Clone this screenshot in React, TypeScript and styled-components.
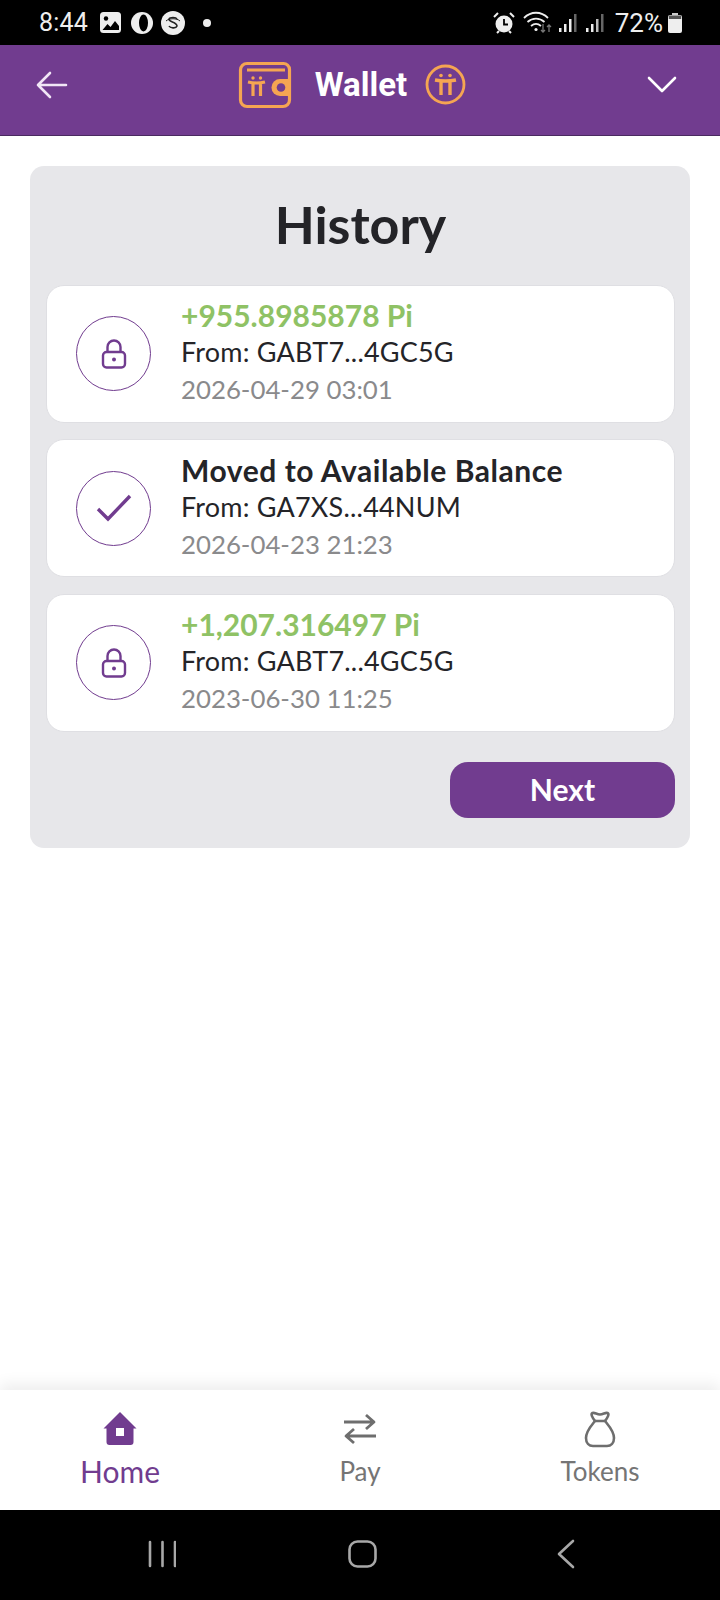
import React from 'react';
import styled, { createGlobalStyle } from 'styled-components';

const GlobalStyle = createGlobalStyle`
  html, body {
    margin: 0;
    padding: 0;
    background: #fff;
  }
  * {
    box-sizing: border-box;
  }
`;

const PURPLE = '#713c8f';
const ORANGE = '#f5a552';
const BODY_FONT = 'Lato, "Noto Sans", sans-serif';

const Screen = styled.div`
  width: 720px;
  height: 1600px;
  display: flex;
  flex-direction: column;
  background: #fff;
  font-family: ${BODY_FONT};
  overflow: hidden;
`;

const StatusBar = styled.div`
  height: 45px;
  flex: none;
  background: #000;
  color: #eee;
  display: flex;
  align-items: center;
  justify-content: space-between;
  padding: 0 38px 0 39px;
  font-family: Roboto, sans-serif;
  font-size: 25px;
`;

const StatusGroup = styled.div`
  display: flex;
  align-items: center;
`;

const StatusTime = styled.span`
  margin-right: 12px;
  letter-spacing: 0.2px;
`;

const StatusPercent = styled.span`
  margin-left: 2px;
  font-size: 26px;
`;

const Header = styled.header`
  height: 91px;
  flex: none;
  background: ${PURPLE};
  border-bottom: 1px solid #4a2a60;
  display: grid;
  grid-template-columns: 1fr auto 1fr;
  align-items: center;
  padding: 0 43px 11px 36px;
`;

const HeaderTitle = styled.div`
  display: flex;
  align-items: center;
  color: #fff;
  font-family: Roboto, sans-serif;
  font-weight: 700;
  font-size: 33px;
  gap: 18px;
  margin-right: 9px;
`;

const HeaderLabel = styled.span`
  margin-left: 5px;
`;

const HeaderEnd = styled.div<{ $end?: boolean }>`
  display: flex;
  justify-content: ${({ $end }) => ($end ? 'flex-end' : 'flex-start')};
`;

const Content = styled.main`
  flex: 1;
  padding: 30px 30px 0;
`;

const Panel = styled.section`
  height: 682px;
  background: #e7e7ea;
  border-radius: 14px;
  padding: 0 15px 0 16px;
  display: flex;
  flex-direction: column;
`;

const Title = styled.h1`
  margin: 0;
  height: 118.5px;
  display: flex;
  align-items: center;
  justify-content: center;
  padding-bottom: 3px;
  font-size: 52px;
  font-weight: 700;
  color: #242428;
`;

const List = styled.div`
  display: flex;
  flex-direction: column;
  gap: 16.5px;
`;

const Card = styled.article`
  height: 138px;
  background: #fff;
  border: 1px solid #dfdfe3;
  border-radius: 18px;
  display: flex;
  align-items: center;
  padding-left: 29px;
`;

const IconCircle = styled.div`
  width: 75px;
  height: 75px;
  flex: none;
  border: 1px solid ${PURPLE};
  border-radius: 50%;
  display: flex;
  align-items: center;
  justify-content: center;
  margin-right: 30px;
`;

const Rows = styled.div`
  display: flex;
  flex-direction: column;
  gap: 5px;
  margin-top: -3px;
`;

const Headline = styled.div<{ $green?: boolean }>`
  font-size: 30px;
  line-height: 32px;
  font-weight: 700;
  white-space: nowrap;
  letter-spacing: ${({ $green }) => ($green ? '0' : '0.55px')};
  color: ${({ $green }) => ($green ? '#8fc265' : '#242428')};
`;

const FromLine = styled.div`
  font-size: 27px;
  line-height: 32px;
  letter-spacing: 0.2px;
  color: #242428;
  white-space: nowrap;
`;

const DateLine = styled.div`
  font-size: 25.8px;
  line-height: 32px;
  color: #8a8a8c;
  white-space: nowrap;
`;

const Actions = styled.div`
  display: flex;
  justify-content: flex-end;
  margin-top: 30.5px;
`;

const NextButton = styled.button`
  width: 225px;
  height: 56px;
  border: 0;
  border-radius: 18px;
  background: ${PURPLE};
  color: #fff;
  font-family: ${BODY_FONT};
  font-size: 30px;
  font-weight: 700;
  padding: 0 0 3px;
`;

const BottomNav = styled.nav`
  height: 120px;
  flex: none;
  background: #fff;
  display: grid;
  grid-template-columns: repeat(3, 1fr);
  box-shadow: 0 -6px 14px rgba(0, 0, 0, 0.07);
`;

const NavItem = styled.div<{ $active?: boolean }>`
  display: flex;
  flex-direction: column;
  align-items: center;
  padding-top: 20px;
  color: ${({ $active }) => ($active ? PURPLE : '#757575')};
  font-size: ${({ $active }) => ($active ? '30px' : '26px')};
`;

const NavIconSlot = styled.div`
  height: 38px;
  display: flex;
  align-items: center;
  justify-content: center;
`;

const NavLabel = styled.span`
  margin-top: 5px;
  line-height: 36px;
`;

const SystemBar = styled.div`
  height: 90px;
  flex: none;
  background: #000;
  display: flex;
  align-items: center;
  gap: 172px;
  padding: 0 0 2px 148px;
`;

const SystemCell = styled.div<{ $shift?: number }>`
  display: flex;
  margin-left: ${({ $shift }) => $shift ?? 0}px;
`;

const BackArrow = () => (
  <svg width="32" height="28" viewBox="0 0 32 28" fill="none" stroke="#f1e6f6" strokeWidth="2.6" strokeLinecap="round" strokeLinejoin="round">
    <path d="M2 14h28M14 2 2 14l12 12" />
  </svg>
);

const Chevron = () => (
  <svg width="30" height="18" viewBox="0 0 30 18" fill="none" stroke="#fff" strokeWidth="2.6" strokeLinecap="round" strokeLinejoin="round">
    <path d="M2 2l13 13L28 2" />
  </svg>
);

const WalletLogo = () => (
  <svg width="54" height="48" viewBox="0 0 54 48" fill="none">
    <path d="M9 2.500h36a6 6 0 0 1 6.500 6V39a6.500 6.500 0 0 1-6.500 6.500H9A6.500 6.500 0 0 1 2.500 39V9A6.500 6.500 0 0 1 9 2.500z" stroke={ORANGE} strokeWidth="3.200" />
    <path d="M9 9h38" stroke={ORANGE} strokeWidth="3" />
    <path d="M53 18H42a8.500 8.500 0 0 0 0 17h11z" fill={ORANGE} />
    <circle cx="43" cy="26.500" r="4.300" fill={PURPLE} />
    <path d="M10 21c5 1.200 12 1.200 17 0M15 22v13M22.500 22v13" stroke={ORANGE} strokeWidth="3.200" />
    <circle cx="15" cy="17" r="1.700" fill={ORANGE} />
    <circle cx="22.500" cy="17" r="1.700" fill={ORANGE} />
  </svg>
);

const PiCoin = () => (
  <svg width="41" height="41" viewBox="0 0 41 41" fill="none">
    <circle cx="20.500" cy="20.500" r="18.500" stroke={ORANGE} strokeWidth="2.800" />
    <path d="M10 16c6.500 1.300 14.500 1.300 21 0M16 17v14M25 17v14" stroke={ORANGE} strokeWidth="3.400" />
    <circle cx="16" cy="11.500" r="1.800" fill={ORANGE} />
    <circle cx="25" cy="11.500" r="1.800" fill={ORANGE} />
  </svg>
);

const LockIcon = () => (
  <svg width="26" height="30" viewBox="0 0 26 30" fill="none" stroke={PURPLE} strokeWidth="2.400">
    <rect x="2" y="13" width="22" height="15.500" rx="3.500" />
    <path d="M6.500 13V8a6.500 6.500 0 0 1 13 0v5" />
    <circle cx="13" cy="20.500" r="2" fill={PURPLE} stroke="none" />
  </svg>
);

const CheckIcon = () => (
  <svg width="36" height="28" viewBox="0 0 36 28" fill="none" stroke={PURPLE} strokeWidth="3.400">
    <path d="M2 15l10 10L34 2" />
  </svg>
);

const HomeIcon = () => (
  <svg width="34" height="34" viewBox="0 0 34 34" fill={PURPLE}>
    <path fillRule="evenodd" d="M17 0 33.500 16.500H30.500V30a3 3 0 0 1-3 3H6.500a3 3 0 0 1-3-3V16.500H.5Z M13 16v8h8v-8Z" />
  </svg>
);

const SwapIcon = () => (
  <svg width="34" height="32" viewBox="0 0 34 32" fill="none" stroke="#6e6e6e" strokeWidth="2.800" strokeLinejoin="round">
    <path d="M1 9h30M23 2l8 7-8 7" />
    <path d="M33 23H3M11 16l-8 7 8 7" />
  </svg>
);

const BagIcon = () => (
  <svg width="32" height="37" viewBox="0 0 32 37" fill="none" stroke="#6e6e6e" strokeWidth="2.600" strokeLinejoin="round" strokeLinecap="round">
    <path d="M11 10C8 6 6.500 3 8.500 2c2-.8 4 1.200 7.500 1.500C19.500 3.200 21.500 1.200 23.500 2c2 1 .5 4-2.500 8z" />
    <path d="M11 10C7 15 2 20 2 27c0 5 3 8 7 8h14c4 0 7-3 7-8 0-7-5-12-9-17" />
  </svg>
);

const GalleryStatus = () => (
  <svg width="21" height="21" viewBox="0 0 21 21">
    <rect width="21" height="21" rx="3.500" fill="#eee" />
    <circle cx="6" cy="6.500" r="2.200" fill="#000" />
    <path d="M2.500 18l5-6 3 3 4.500-6 4 5v4z" fill="#000" />
  </svg>
);

const OperaStatus = () => (
  <svg width="22" height="22" viewBox="0 0 22 22" style={{ marginLeft: 10 }}>
    <circle cx="11" cy="11" r="11" fill="#eee" />
    <ellipse cx="12.500" cy="11" rx="4.500" ry="8.500" fill="#000" />
  </svg>
);

const SStatus = () => (
  <svg width="24" height="24" viewBox="0 0 24 24" style={{ marginLeft: 8 }} fill="none">
    <circle cx="12" cy="12" r="12" fill="#eee" />
    <path d="M16 8c-1-2-7-2-8 0-1 3 8 3 8 7-1 3-7 2-8 0" stroke="#222" strokeWidth="1.600" />
    <path d="M5 10c3-3 11-3 14 0" stroke="#222" strokeWidth="1" />
  </svg>
);

const Dot = () => (
  <svg width="8" height="8" viewBox="0 0 8 8" style={{ marginLeft: 18 }}>
    <circle cx="4" cy="4" r="4" fill="#eee" />
  </svg>
);

const AlarmStatus = () => (
  <svg width="22" height="22" viewBox="0 0 22 22" style={{ marginRight: 8 }}>
    <circle cx="11" cy="12" r="8.500" fill="#eee" />
    <path d="M11 7v5.500h4" stroke="#000" strokeWidth="1.800" fill="none" />
    <path d="M1 5l4-4M21 5l-4-4M4 21l2-2M18 21l-2-2" stroke="#eee" strokeWidth="2" />
  </svg>
);

const WifiStatus = () => (
  <svg width="30" height="24" viewBox="0 0 30 24" fill="none" style={{ marginRight: 6 }}>
    <path d="M1 7c7-7 17-7 24 0M4.500 11c5-4.500 12-4.500 17 0M8 15c3-2.500 7-2.500 10 0" stroke="#eee" strokeWidth="1.800" />
    <circle cx="13" cy="18.500" r="1.600" fill="#eee" />
    <path d="M20 13v8M18 19l2 2 2-2M26 21v-7M24 16l2-2 2 2" stroke="#777" strokeWidth="1.300" />
  </svg>
);

const Signal = ({ dim }: { dim?: boolean }) => (
  <svg width="18" height="20" viewBox="0 0 18 20" style={{ marginRight: 9 }}>
    <rect x="0" y="15" width="2.500" height="4" fill="#eee" />
    <rect x="5" y="11" width="2.500" height="8" fill="#eee" />
    <rect x="10" y="6" width="2.500" height="13" fill={dim ? '#bbb' : '#eee'} />
    <rect x="15" y="1" width="2.500" height="18" fill="#666" />
  </svg>
);

const BatteryStatus = () => (
  <svg width="14" height="20" viewBox="0 0 14 20" style={{ marginLeft: 5 }}>
    <rect x="4" y="0" width="6" height="2" fill="#ccc" />
    <rect x="0" y="2" width="14" height="18" rx="2" fill="#eee" />
    <rect x="0.800" y="2.500" width="12.400" height="3.500" fill="#555" />
  </svg>
);

const MenuBars = () => (
  <svg width="28" height="28" viewBox="0 0 28 28" stroke="#a8a8a8" strokeWidth="2.600" strokeLinecap="round">
    <path d="M2 2v24M14.500 2v24M27 2v24" />
  </svg>
);

const HomeSquare = () => (
  <svg width="29" height="28" viewBox="0 0 29 28" fill="none" stroke="#a8a8a8" strokeWidth="2.600">
    <rect x="1.500" y="1.500" width="26" height="25" rx="8" />
  </svg>
);

const SystemBack = () => (
  <svg width="18" height="30" viewBox="0 0 18 30" fill="none" stroke="#a8a8a8" strokeWidth="2.600" strokeLinecap="round" strokeLinejoin="round">
    <path d="M16 2 2 15l14 13" />
  </svg>
);

const HISTORY = [
  { title: '+955.8985878 Pi', green: true, from: 'GABT7...4GC5G', date: '2026-04-29 03:01', icon: 'lock' },
  { title: 'Moved to Available Balance', green: false, from: 'GA7XS...44NUM', date: '2026-04-23 21:23', icon: 'check' },
  { title: '+1,207.316497 Pi', green: true, from: 'GABT7...4GC5G', date: '2023-06-30 11:25', icon: 'lock' },
];

const App: React.FC = () => (
  <Screen>
    <GlobalStyle />
    <StatusBar>
      <StatusGroup>
        <StatusTime>8:44</StatusTime>
        <GalleryStatus />
        <OperaStatus />
        <SStatus />
        <Dot />
      </StatusGroup>
      <StatusGroup>
        <AlarmStatus />
        <WifiStatus />
        <Signal />
        <Signal dim />
        <StatusPercent>72%</StatusPercent>
        <BatteryStatus />
      </StatusGroup>
    </StatusBar>

    <Header>
      <HeaderEnd>
        <BackArrow />
      </HeaderEnd>
      <HeaderTitle>
        <WalletLogo />
        <HeaderLabel>Wallet</HeaderLabel>
        <PiCoin />
      </HeaderTitle>
      <HeaderEnd $end>
        <Chevron />
      </HeaderEnd>
    </Header>

    <Content>
      <Panel>
        <Title>History</Title>
        <List>
          {HISTORY.map((item) => (
            <Card key={item.date}>
              <IconCircle>{item.icon === 'lock' ? <LockIcon /> : <CheckIcon />}</IconCircle>
              <Rows>
                <Headline $green={item.green}>{item.title}</Headline>
                <FromLine>From: {item.from}</FromLine>
                <DateLine>{item.date}</DateLine>
              </Rows>
            </Card>
          ))}
        </List>
        <Actions>
          <NextButton>Next</NextButton>
        </Actions>
      </Panel>
    </Content>

    <BottomNav>
      <NavItem $active>
        <NavIconSlot>
          <HomeIcon />
        </NavIconSlot>
        <NavLabel>Home</NavLabel>
      </NavItem>
      <NavItem>
        <NavIconSlot>
          <SwapIcon />
        </NavIconSlot>
        <NavLabel>Pay</NavLabel>
      </NavItem>
      <NavItem>
        <NavIconSlot>
          <BagIcon />
        </NavIconSlot>
        <NavLabel>Tokens</NavLabel>
      </NavItem>
    </BottomNav>

    <SystemBar>
      <SystemCell>
        <MenuBars />
      </SystemCell>
      <SystemCell>
        <HomeSquare />
      </SystemCell>
      <SystemCell $shift={8}>
        <SystemBack />
      </SystemCell>
    </SystemBar>
  </Screen>
);

export default App;
